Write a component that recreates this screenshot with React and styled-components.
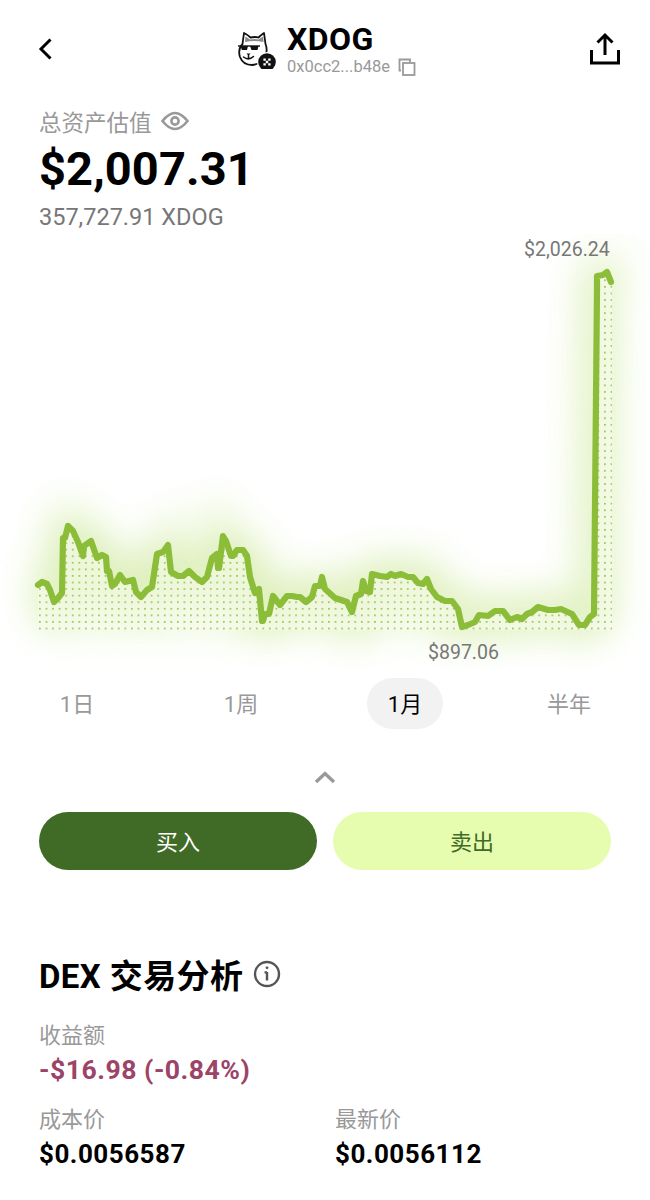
import styled, { createGlobalStyle } from 'styled-components'

const GlobalStyle = createGlobalStyle`
  html, body {
    margin: 0;
    background: #fff;
    font-family: Roboto, "Noto Sans CJK SC", sans-serif;
    color: #000;
  }
  * { box-sizing: border-box; }
`;

const Page = styled.div`
  width: 650px;
  height: 1200px;
  overflow: hidden;
`;

const Header = styled.header`
  display: flex;
  align-items: center;
  justify-content: space-between;
  height: 98px;
  padding: 0 29px 0 30px;
`;

const IconBtn = styled.div`
  display: flex;
  width: 32px;
  height: 32px;
  align-items: center;
  justify-content: center;
`;

const Token = styled.div`
  display: flex;
  align-items: center;
  gap: 10px;
  margin-left: 2px;
`;

const TokenInfo = styled.div`
  padding-top: 4px;
`;

const TokenName = styled.div`
  font-size: 32px;
  line-height: 30px;
  font-weight: 700;
  margin-top: 1px;
  letter-spacing: 0.4px;
`;

const Address = styled.div`
  display: flex;
  align-items: center;
  gap: 8px;
  margin-top: 1px;
  font-size: 16.5px;
  line-height: 24px;
  color: #999;
`;

const Summary = styled.section`
  padding: 8px 39px 0;
`;

const TotalLabel = styled.div`
  display: flex;
  align-items: center;
  gap: 9px;
  height: 30px;
  font-size: 22.5px;
  color: #999;
`;

const TotalValue = styled.div`
  margin-top: 2px;
  font-size: 47px;
  line-height: 62px;
  font-weight: 700;
  letter-spacing: 0.1px;
`;

const Holding = styled.div`
  margin-top: 1px;
  font-size: 23.5px;
  line-height: 32px;
  color: #777;
`;

const Chart = styled.div`
  position: relative;
  height: 435px;
  margin-top: 1px;
`;

const PriceTag = styled.span`
  position: absolute;
  top: ${({ $top }) => $top}px;
  left: ${({ $left }) => $left}px;
  font-size: 19.5px;
  line-height: 24px;
  color: #777;
`;

const Tabs = styled.div`
  display: flex;
  gap: 88px;
  padding-left: 39px;
  margin-top: 9px;
`;

const Tab = styled.div`
  display: flex;
  width: 76px;
  height: 51px;
  padding-bottom: 4px;
  align-items: center;
  justify-content: center;
  border-radius: 26px;
  font-size: 22px;
  background: ${({ $active }) => ($active ? '#f2f2f2' : 'transparent')};
  color: ${({ $active }) => ($active ? '#000' : '#999')};
`;

const Collapse = styled.div`
  display: flex;
  justify-content: center;
  margin-top: 41px;
`;

const Actions = styled.div`
  display: flex;
  gap: 16px;
  padding: 0 39px;
  margin-top: 28px;
`;

const ActionBtn = styled.button`
  flex: 1;
  height: 58px;
  padding: 0 0 2px;
  border: none;
  border-radius: 29px;
  font-family: inherit;
  font-size: 22px;
  background: ${({ $primary }) => ($primary ? '#3f6b26' : '#e6fdb0')};
  color: ${({ $primary }) => ($primary ? '#fff' : '#3f6b26')};
`;

const Analysis = styled.section`
  padding: 0 39px;
  margin-top: 82px;
`;

const SectionTitle = styled.h2`
  display: flex;
  align-items: center;
  gap: 10px;
  height: 44px;
  margin: 0;
  font-size: 33px;
  font-weight: 700;
  letter-spacing: 0.4px;
`;

const StatRow = styled.div`
  display: grid;
  grid-template-columns: 296px 1fr;
  margin-top: ${({ $gap }) => $gap}px;
`;

const StatLabel = styled.div`
  font-size: 22px;
  line-height: 32px;
  color: #999;
`;

const StatValue = styled.div`
  font-size: ${({ $loss }) => ($loss ? 26.6 : 26)}px;
  line-height: 36px;
  font-weight: 700;
  letter-spacing: 0.5px;
  color: ${({ $loss }) => ($loss ? '#9c4468' : '#000')};
`;

const points = [
  [38,586],[42,583],[47,585],[50,591],[54,603],[58,599],[62,594],[63,539],[65,539],[68,527],[73,532],[78,543],
  [83,557],[84,547],[91,542],[97,559],[102,556],[106,558],[107,572],[109,572],[112,587],[115,585],[120,576],
  [125,583],[133,581],[136,593],[141,598],[147,591],[152,588],[157,555],[163,553],[168,546],[171,573],[178,577],
  [183,577],[189,572],[195,578],[202,583],[207,578],[212,559],[217,555],[218,569],[219,569],[223,537],[226,542],
  [231,557],[233,557],[237,551],[243,551],[247,557],[250,578],[255,594],[259,590],[262,622],[263,622],[265,615],
  [269,615],[273,597],[280,606],[287,597],[292,597],[297,598],[300,598],[306,603],[312,598],[315,587],[320,587],
  [322,578],[325,590],[335,599],[347,603],[352,613],[356,597],[361,595],[363,582],[366,592],[370,593],[372,575],
  [380,577],[387,578],[391,575],[395,577],[401,575],[408,578],[413,578],[418,584],[423,585],[427,580],[431,590],
  [437,598],[445,602],[452,602],[458,610],[462,628],[468,626],[475,623],[479,616],[488,617],[495,612],[503,612],
  [510,621],[517,618],[522,620],[527,615],[532,613],[538,608],[548,611],[555,611],[561,610],[572,615],[579,626],
  [585,626],[590,618],[594,615],[597,290],[597,277],[603,276],[607,273],[611,283],
];
const line = points.map(p => p.join(',')).join(' ');
const area = `38,631 ${line} 612,283 612,631`;

function PriceChart() {
  return (
    <svg width="650" height="435" viewBox="0 235 650 435" style={{ display: 'block' }}>
      <defs>
        <filter id="glow" x="-20%" y="-30%" width="140%" height="160%">
          <feGaussianBlur stdDeviation="19" />
        </filter>
        <pattern id="dots" x="39" y="628.6" width="6.57" height="6.57" patternUnits="userSpaceOnUse">
          <rect width="1.7" height="1.7" fill="#9cc653" />
        </pattern>
        <clipPath id="under">
          <polygon points={area} />
        </clipPath>
      </defs>
      <polygon points={area} fill="#eef8dc" filter="url(#glow)" />
      <polyline points={line} fill="none" stroke="#c6e48c" strokeWidth="30" opacity="0.55" filter="url(#glow)" />
      <polygon points={area} fill="#f7fbee" opacity="0.55" />
      <rect x="38" y="270" width="574" height="361" fill="url(#dots)" clipPath="url(#under)" />
      <polyline points={line} fill="none" stroke="#8bbd38" strokeWidth="6.2" strokeLinejoin="round" strokeLinecap="round" />
    </svg>
  )
}

function DogLogo() {
  return (
    <svg width="40" height="40" viewBox="0 0 40 40" fill="none">
      <path d="M5.5 15 L7 4 Q11 6 13.5 8.5 Q18 7.5 21.5 8.5 Q24 6 27 4 L28.5 15 Q30.5 20 29 25 Q26 35 15 36 Q6 36 3 28 Q0.5 20 5.5 15Z" fill="#fff" stroke="#111" strokeWidth="1.8" strokeLinejoin="round" />
      <path d="M8 13 L8.5 7.5 L13 10.5 Q17.5 9.5 21.5 10.5 L26 7.5 L26.5 13 Q17 11 8 13Z" fill="#8a8a8a" />
      <path d="M1 17 H23" stroke="#111" strokeWidth="1.4" />
      <path d="M3.5 17 h7.5 l-1 4 h-5.2z M13 17 h8.5 l-1 4 h-6z" fill="#111" />
      <path d="M9.5 24.5 h4 l-2 2.2z" fill="#111" />
      <path d="M6.5 28 q5 4 10 -0.5 M11.5 26.5 v3" stroke="#111" strokeWidth="1.5" strokeLinecap="round" />
      <circle cx="30" cy="33" r="10" fill="#fff" />
      <circle cx="30" cy="33" r="8.8" fill="#111" />
      <path d="M26.4 29.4h2.4v2.4h-2.4zM31.2 29.4h2.4v2.4h-2.4zM28.8 31.8h2.4v2.4h-2.4zM26.4 34.2h2.4v2.4h-2.4zM31.2 34.2h2.4v2.4h-2.4z" fill="#fff" />
    </svg>
  )
}

function App() {
  return (
    <Page>
      <GlobalStyle />
      <Header>
        <IconBtn>
          <svg width="20" height="26" viewBox="0 0 20 26" fill="none">
            <path d="M14.5 3.5 L5 13 L14.5 22.5" stroke="#000" strokeWidth="3" />
          </svg>
        </IconBtn>
        <Token>
          <DogLogo />
          <TokenInfo>
            <TokenName>XDOG</TokenName>
            <Address>
              0x0cc2...b48e
              <svg width="18" height="18" viewBox="0 0 18 18" fill="none" stroke="#999" strokeWidth="1.8">
                <path d="M3 12.5 H1.5 V1.5 H12 V4" />
                <rect x="5" y="5" width="11.5" height="12" />
              </svg>
            </Address>
          </TokenInfo>
        </Token>
        <IconBtn>
          <svg width="32" height="34" viewBox="0 0 32 34" fill="none" stroke="#000" strokeWidth="3">
            <path d="M16 23 V3.5 M8.5 10.5 L16 3 L23.5 10.5 M2.5 18 V31 H29.5 V18" />
          </svg>
        </IconBtn>
      </Header>

      <Summary>
        <TotalLabel>
          总资产估值
          <svg width="28" height="20" viewBox="0 0 28 20" fill="none" stroke="#999" strokeWidth="2.6">
            <path d="M1.5 10 Q14 -6 26.5 10 Q14 26 1.5 10Z" />
            <circle cx="14" cy="10" r="3.6" />
          </svg>
        </TotalLabel>
        <TotalValue>$2,007.31</TotalValue>
        <Holding>357,727.91 XDOG</Holding>
      </Summary>

      <Chart>
        <PriceChart />
        <PriceTag $top={4} $left={524}>$2,026.24</PriceTag>
        <PriceTag $top={407} $left={428}>$897.06</PriceTag>
      </Chart>

      <Tabs>
        <Tab>1日</Tab>
        <Tab>1周</Tab>
        <Tab $active>1月</Tab>
        <Tab>半年</Tab>
      </Tabs>

      <Collapse>
        <svg width="24" height="14" viewBox="0 0 24 14" fill="none">
          <path d="M3 12 L12 3.5 L21 12" stroke="#999" strokeWidth="3.4" />
        </svg>
      </Collapse>

      <Actions>
        <ActionBtn $primary>买入</ActionBtn>
        <ActionBtn>卖出</ActionBtn>
      </Actions>

      <Analysis>
        <SectionTitle>
          DEX 交易分析
          <svg width="28" height="28" viewBox="0 0 28 28" fill="none" stroke="#555" strokeWidth="2.4">
            <circle cx="14" cy="14" r="12" />
            <path d="M14 12 V20.5 M11.5 12.4 H14" />
            <circle cx="14" cy="7.8" r="1" fill="#555" strokeWidth="1" />
          </svg>
        </SectionTitle>
        <StatRow $gap={24}>
          <div>
            <StatLabel>收益额</StatLabel>
            <StatValue $loss>-$16.98 (-0.84%)</StatValue>
          </div>
        </StatRow>
        <StatRow $gap={16}>
          <div>
            <StatLabel>成本价</StatLabel>
            <StatValue>$0.0056587</StatValue>
          </div>
          <div>
            <StatLabel>最新价</StatLabel>
            <StatValue>$0.0056112</StatValue>
          </div>
        </StatRow>
      </Analysis>
    </Page>
  )
}

export default App
